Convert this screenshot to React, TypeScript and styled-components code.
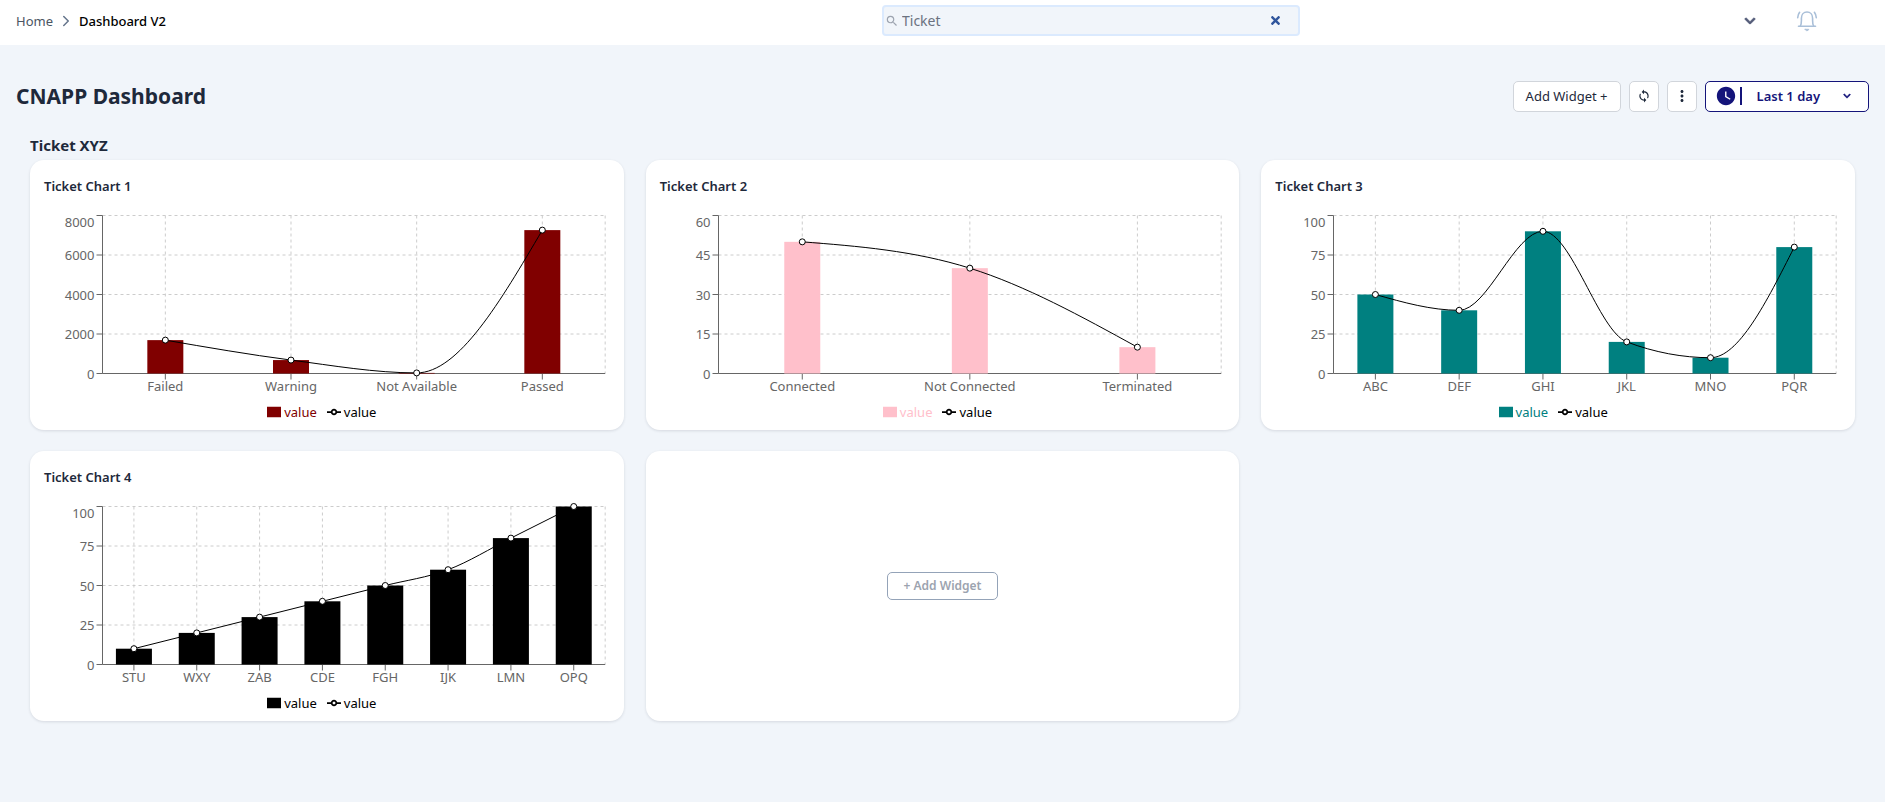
import React, { useLayoutEffect, useRef, useState } from 'react';
import styled, { createGlobalStyle } from 'styled-components';
import { ChevronRight } from 'lucide-react';
import { FaChevronDown, FaTimes } from 'react-icons/fa';
import { MdMoreVert, MdSearch, MdSync, MdWatchLater } from 'react-icons/md';

const GlobalStyle = createGlobalStyle`
  *, *::before, *::after { box-sizing: border-box; }
  html { background: #f1f5fa; }
  body {
    margin: 0;
    color: #1e293b;
    font-family: 'Noto Sans', 'Open Sans', sans-serif;
    font-size: 13px;
    line-height: 20px;
  }
  h1, h2, h3, ol, ul { margin: 0; padding: 0; }
  ol, ul { list-style: none; }
  button, input { font: inherit; }
  button { cursor: pointer; }
  svg { display: block; flex: none; }
`;

const navy = '#14147a';

const Header = styled.header`
  display: grid;
  grid-template-columns: 866fr 418fr 569fr;
  align-items: center;
  height: 45px;
  padding: 0 16px 4px;
  background: #fff;
`;

const Breadcrumbs = styled.ol`
  display: flex;
  align-items: center;
  gap: 4px;
  color: #64748b;
`;

const Crumb = styled.li`
  display: flex;
  align-items: center;
  gap: 4px;

  a { color: #4b5563; text-decoration: none; }
  &[aria-current] { color: #000; font-weight: 500; }
`;

const SearchBox = styled.form`
  display: flex;
  align-items: center;
  height: 31px;
  padding: 0 16px 0 1px;
  border: 2px solid #dbeafe;
  border-radius: 4px;
  background: #f1f5fa;
  color: #9ca3af;
`;

const SearchInput = styled.input`
  flex: 1;
  min-width: 0;
  padding: 0 3px;
  border: 0;
  outline: 0;
  background: none;
  color: #6b7280;
  font-size: 14px;
`;

const IconButton = styled.button<{ $color: string }>`
  display: flex;
  align-items: center;
  justify-content: center;
  padding: 0;
  border: 0;
  background: none;
  color: ${(p) => p.$color};
`;

const BoldChevron = styled(FaChevronDown)`
  stroke-width: 32px;
`;

const HeaderActions = styled.div`
  display: flex;
  align-items: center;
  justify-content: flex-end;
  gap: 40px;
  padding-right: 51px;
`;

const TitleBar = styled.div`
  display: flex;
  align-items: center;
  justify-content: space-between;
  padding: 35px 16px 0;
`;

const PageTitle = styled.h1`
  font-size: 21px;
  line-height: 32px;
  font-weight: 700;
`;

const Actions = styled.div`
  display: flex;
  gap: 8px;
`;

const ActionButton = styled.button<{ $square?: boolean }>`
  display: flex;
  align-items: center;
  justify-content: center;
  width: ${(p) => (p.$square ? '30px' : 'auto')};
  height: 31px;
  padding: ${(p) => (p.$square ? '0' : '0 12px')};
  border: 1px solid #d1d5db;
  border-radius: 5px;
  background: #fff;
  color: #1e293b;
`;

const RangeButton = styled(ActionButton)`
  padding: 0 17px 0 9px;
  border-color: ${navy};
  color: ${navy};
  font-weight: 600;
`;

const RangeIcon = styled.span`
  padding-right: 3px;
  margin-right: 15px;
  border-right: 2px solid ${navy};

  svg { margin: -2px 0; }
`;

const RangeLabel = styled.span`
  margin-right: 23px;
`;

const Section = styled.section`
  padding: 21px 30px 30px;
`;

const SectionTitle = styled.h2`
  padding-bottom: 3px;
  font-size: 15px;
  line-height: 24px;
  font-weight: 700;
`;

const CardGrid = styled.div`
  display: grid;
  grid-template-columns: repeat(3, minmax(0, 1fr));
  grid-auto-rows: minmax(270px, auto);
  gap: 21px 22px;
`;

const Card = styled.article<{ $centered?: boolean }>`
  display: flex;
  flex-direction: column;
  align-items: ${(p) => (p.$centered ? 'center' : 'stretch')};
  justify-content: ${(p) => (p.$centered ? 'center' : 'flex-start')};
  padding: ${(p) => (p.$centered ? '14px' : '16px 14px 8px')};
  border-radius: 14px;
  background: #fff;
  box-shadow: 0 1px 3px rgba(15, 23, 42, 0.12);
`;

const CardTitle = styled.h3`
  font-size: 13px;
  line-height: 20px;
  font-weight: 600;
`;

const ChartArea = styled.div`
  padding-top: 14px;

  svg text { fill: #666; font-size: 13px; }
`;

const Legend = styled.ul`
  display: flex;
  justify-content: center;
  gap: 10px;
  padding-right: 10px;
`;

const LegendItem = styled.li<{ $color: string }>`
  display: flex;
  align-items: center;
  gap: 3px;
  color: ${(p) => p.$color};
`;

const AddWidgetButton = styled.button`
  height: 28px;
  padding: 0 16px;
  border: 1px solid #94a3b8;
  border-radius: 5px;
  background: #fff;
  color: #9ca3af;
  font-size: 12px;
  font-weight: 600;
`;

type Point = [label: string, value: number];
type ChartSpec = { title: string; color: string; ticks: number[]; data: Point[] };

const charts: ChartSpec[] = [
  {
    title: 'Ticket Chart 1',
    color: '#800000',
    ticks: [0, 2000, 4000, 6000, 8000],
    data: [['Failed', 1690], ['Warning', 680], ['Not Available', 30], ['Passed', 7260]],
  },
  {
    title: 'Ticket Chart 2',
    color: '#ffc0cb',
    ticks: [0, 15, 30, 45, 60],
    data: [['Connected', 50], ['Not Connected', 40], ['Terminated', 10]],
  },
  {
    title: 'Ticket Chart 3',
    color: '#008080',
    ticks: [0, 25, 50, 75, 100],
    data: [['ABC', 50], ['DEF', 40], ['GHI', 90], ['JKL', 20], ['MNO', 10], ['PQR', 80]],
  },
  {
    title: 'Ticket Chart 4',
    color: '#000000',
    ticks: [0, 25, 50, 75, 100],
    data: [['STU', 10], ['WXY', 20], ['ZAB', 30], ['CDE', 40], ['FGH', 50], ['IJK', 60], ['LMN', 80], ['OPQ', 100]],
  },
];

/** Monotone cubic path through the points, with no overshoot between them. */
function monotonePath(pts: { x: number; y: number }[]) {
  const n = pts.length;
  const slope = pts.slice(1).map((p, i) => (p.y - pts[i].y) / (p.x - pts[i].x));
  const tangent: number[] = new Array(n).fill(0);
  for (let i = 1; i < n - 1; i++) {
    const a = slope[i - 1];
    const b = slope[i];
    const mean = (a + b) / 2;
    tangent[i] = (Math.sign(a) + Math.sign(b)) * Math.min(Math.abs(a), Math.abs(b), 0.5 * Math.abs(mean)) || 0;
  }
  tangent[0] = (3 * slope[0] - tangent[1]) / 2;
  tangent[n - 1] = (3 * slope[n - 2] - tangent[n - 2]) / 2;
  let d = `M${pts[0].x},${pts[0].y}`;
  for (let i = 1; i < n; i++) {
    const p = pts[i - 1];
    const q = pts[i];
    const dx = (q.x - p.x) / 3;
    d += `C${p.x + dx},${p.y + dx * tangent[i - 1]},${q.x - dx},${q.y - dx * tangent[i]},${q.x},${q.y}`;
  }
  return d;
}

const PLOT = { left: 58, right: 5, top: 5, height: 158 };
const BAR_WIDTH = 36;

function ComboChart({ title, color, ticks, data }: ChartSpec) {
  const ref = useRef<HTMLDivElement>(null);
  const [width, setWidth] = useState(560);

  useLayoutEffect(() => {
    const el = ref.current;
    if (!el) return;
    const measure = () => setWidth(el.getBoundingClientRect().width);
    measure();
    const observer = new ResizeObserver(measure);
    observer.observe(el);
    return () => observer.disconnect();
  }, []);

  const right = width - PLOT.right;
  const bottom = PLOT.top + PLOT.height;
  const band = (right - PLOT.left) / data.length;
  const max = ticks[ticks.length - 1];
  const yOf = (v: number) => bottom - (v / max) * PLOT.height;
  const points = data.map(([label, value], i) => ({ label, x: PLOT.left + band * (i + 0.5), y: yOf(value) }));

  return (
    <ChartArea ref={ref}>
      <svg width="100%" height={192} role="img" aria-label={title}>
        {/* The half-pixel shift puts one-pixel strokes on whole device pixels. */}
        <g transform="translate(0.5 0.5)">
          <g stroke="#ccc" strokeDasharray="3 3">
            {ticks.map((t) => <line key={t} x1={PLOT.left} x2={right} y1={yOf(t)} y2={yOf(t)} />)}
            {points.map((p) => <line key={p.label} x1={p.x} x2={p.x} y1={PLOT.top} y2={bottom} />)}
            <line x1={right} x2={right} y1={PLOT.top} y2={bottom} />
          </g>
          <g stroke="#666">
            <line x1={PLOT.left} x2={right} y1={bottom} y2={bottom} />
            <line x1={PLOT.left} x2={PLOT.left} y1={PLOT.top} y2={bottom} />
            {ticks.map((t) => <line key={t} x1={PLOT.left - 6} x2={PLOT.left} y1={yOf(t)} y2={yOf(t)} />)}
            {points.map((p) => <line key={p.label} x1={p.x} x2={p.x} y1={bottom} y2={bottom + 6} />)}
          </g>
          <g textAnchor="end">
            {ticks.map((t) => (
              <text key={t} x={PLOT.left - 8} y={Math.max(yOf(t), PLOT.top + 6) + 5}>{t}</text>
            ))}
          </g>
          <g textAnchor="middle">
            {points.map((p) => <text key={p.label} x={p.x} y={bottom + 17}>{p.label}</text>)}
          </g>
          <g fill={color}>
            {points.map((p) => (
              <rect key={p.label} x={p.x - BAR_WIDTH / 2} y={p.y} width={BAR_WIDTH} height={bottom - p.y} />
            ))}
          </g>
          <path d={monotonePath(points)} fill="none" stroke="#000" />
          <g fill="#fff" stroke="#000">
            {points.map((p) => <circle key={p.label} cx={p.x} cy={p.y} r={3} />)}
          </g>
        </g>
      </svg>
    </ChartArea>
  );
}

function ChartLegend({ color }: { color: string }) {
  return (
    <Legend>
      <LegendItem $color={color}>
        <svg width="14" height="14" viewBox="0 0 32 32" aria-hidden="true">
          <path d="M0,4h32v24h-32z" fill="currentColor" />
        </svg>
        value
      </LegendItem>
      <LegendItem $color="#000">
        <svg width="14" height="14" viewBox="0 0 32 32" fill="none" stroke="currentColor" strokeWidth="4" aria-hidden="true">
          <path d="M0,16h10.7A5.3,5.3,0,1,1,21.3,16H32M21.3,16A5.3,5.3,0,1,1,10.7,16" />
        </svg>
        value
      </LegendItem>
    </Legend>
  );
}

function BellIcon() {
  return (
    <svg width="22" height="22" viewBox="0 0 22 22" fill="none" stroke="currentColor" strokeWidth="1.6" strokeLinecap="round" strokeLinejoin="round" aria-hidden="true">
      <path d="M2.5 16.2h17" />
      <path d="M4.4 16c.8-1.600 1-3.300 1-5.600V8.200C5.400 4.600 7.700 2 11 2s5.600 2.600 5.600 6.200v2.200c0 2.300.2 4 1 5.600" />
      <path d="M3.600 2.300C2.500 3.700 1.900 5.400 1.700 7.700M18.400 2.300c1.100 1.400 1.700 3.100 1.900 5.400" />
      <path d="M9.200 19.300h3.600c-.2.900-.9 1.400-1.800 1.400s-1.600-.5-1.800-1.400z" fill="currentColor" strokeWidth=".8" />
    </svg>
  );
}

export default function App() {
  const [query, setQuery] = useState('Ticket');
  return (
    <>
      <GlobalStyle />
      <Header>
        <nav aria-label="Breadcrumb">
          <Breadcrumbs>
            <Crumb><a href="#home">Home</a><ChevronRight size={18} aria-hidden="true" /></Crumb>
            <Crumb aria-current="page">Dashboard V2</Crumb>
          </Breadcrumbs>
        </nav>
        <SearchBox role="search" onSubmit={(e) => e.preventDefault()}>
          <MdSearch size={14} aria-hidden="true" />
          <SearchInput type="text" aria-label="Search" value={query} onChange={(e) => setQuery(e.target.value)} />
          <IconButton type="button" $color="#2f559c" aria-label="Clear search" onClick={() => setQuery('')}>
            <FaTimes size={13} />
          </IconButton>
        </SearchBox>
        <HeaderActions>
          <IconButton type="button" $color="#535b78" aria-label="Account menu"><BoldChevron size={12} /></IconButton>
          <IconButton type="button" $color="#a9bfd8" aria-label="Notifications"><BellIcon /></IconButton>
        </HeaderActions>
      </Header>
      <main>
        <TitleBar>
          <PageTitle>CNAPP Dashboard</PageTitle>
          <Actions>
            <ActionButton type="button">Add Widget +</ActionButton>
            <ActionButton type="button" $square aria-label="Refresh"><MdSync size={14} /></ActionButton>
            <ActionButton type="button" $square aria-label="More options"><MdMoreVert size={18} /></ActionButton>
            <RangeButton type="button">
              <RangeIcon><MdWatchLater size={22} /></RangeIcon>
              <RangeLabel>Last 1 day</RangeLabel>
              <BoldChevron size={8} />
            </RangeButton>
          </Actions>
        </TitleBar>
        <Section>
          <SectionTitle>Ticket XYZ</SectionTitle>
          <CardGrid>
            {charts.map((chart) => (
              <Card key={chart.title}>
                <CardTitle>{chart.title}</CardTitle>
                <ComboChart {...chart} />
                <ChartLegend color={chart.color} />
              </Card>
            ))}
            <Card $centered>
              <AddWidgetButton type="button">+ Add Widget</AddWidgetButton>
            </Card>
          </CardGrid>
        </Section>
      </main>
    </>
  );
}
